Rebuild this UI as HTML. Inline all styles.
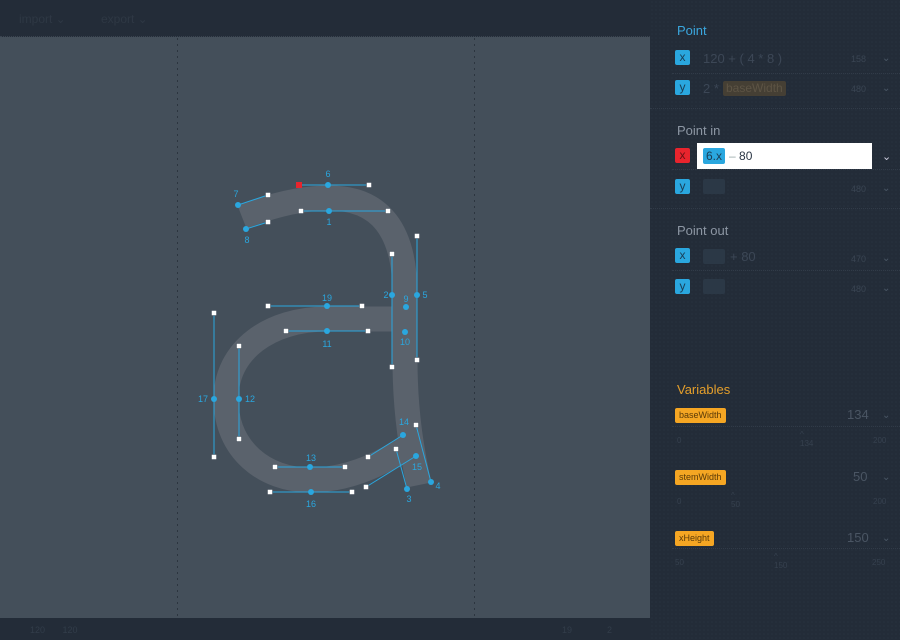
<!DOCTYPE html>
<html><head><meta charset="utf-8"><style>
*{margin:0;padding:0;box-sizing:border-box}
body{width:900px;height:640px;overflow:hidden;background:#232c38;font-family:"Liberation Sans",sans-serif;position:relative}
.a{position:absolute}
.top{left:0;top:0;width:650px;height:37px;background:#232c38;border-bottom:1px dotted #3a4450}
.canvas{left:0;top:37px;width:650px;height:581px;background:#444f5a}
.bot{left:0;top:618px;width:650px;height:22px;background:#232c38}
.side{left:650px;top:0;width:250px;height:640px;background:#232c38;background-image:radial-gradient(#2c3643 0.6px,transparent 0.8px);background-size:4px 4px}
.h{font-size:13px}
.bd{width:15px;height:15px;border-radius:2px;background:#2aa7df;color:#1a3d55;font-size:12px;text-align:center;line-height:14px}
.dim{color:#3c4756;font-size:13px}
.ch{color:#3a4553;font-size:9px}
.cv{color:#4a5665;font-size:10px}
.sep{height:1px;border-top:1px dotted #313b48}
.ob{height:15px;border-radius:2px;background:#f5a623;color:#5a3a08;font-size:9px;line-height:15px;padding:0 4px}
.sm{color:#36414f;font-size:8px}
.vl{top:38px;width:1px;height:580px;background:repeating-linear-gradient(to bottom,#2c353f 0 2px,transparent 2px 6px)}
</style></head><body>
<div class="a top"></div>
<div class="a" style="left:19px;top:12px;color:#2e3844;font-size:12px">import ⌄</div>
<div class="a" style="left:101px;top:12px;color:#2e3844;font-size:12px">export ⌄</div>
<div class="a canvas"></div>
<div class="a vl" style="left:177px"></div>
<div class="a vl" style="left:474px"></div>
<div class="a bot"></div>
<div class="a" style="left:30px;top:625px;color:#323d4a;font-size:9px">120 &nbsp;&nbsp;&nbsp;&nbsp;&nbsp; 120</div>
<div class="a" style="left:562px;top:625px;color:#323d4a;font-size:9px">19 &nbsp;&nbsp;&nbsp;&nbsp;&nbsp;&nbsp;&nbsp;&nbsp;&nbsp;&nbsp;&nbsp;&nbsp; 2</div>

<svg class="a" style="left:0;top:0" width="650" height="640" viewBox="0 0 650 640">
<g fill="none" stroke="#5a626c" stroke-width="25">
<path d="M242,217 C270,206 300,198 329,198 C380,198 405,230 405,295 L405,360 C405,420 414,460 419,485"/>
<path d="M405,319 L327,319 C270,319 226,350 226,399 C226,450 265,480 310,480 C350,480 385,462 410,445"/>
</g>
<g stroke="#2aa7df" stroke-width="1" fill="none">
<line x1="238" y1="205" x2="268" y2="195"/><line x1="246" y1="229" x2="268" y2="222"/>
<line x1="299" y1="185" x2="369" y2="185"/><line x1="301" y1="211" x2="388" y2="211"/>
<line x1="392" y1="254" x2="392" y2="367"/><line x1="417" y1="236" x2="417" y2="360"/>
<line x1="268" y1="306" x2="362" y2="306"/><line x1="286" y1="331" x2="368" y2="331"/>
<line x1="214" y1="313" x2="214" y2="457"/><line x1="239" y1="346" x2="239" y2="439"/>
<line x1="275" y1="467" x2="345" y2="467"/><line x1="270" y1="492" x2="352" y2="492"/>
<line x1="403" y1="435" x2="368" y2="457"/><line x1="416" y1="456" x2="366" y2="487"/>
<line x1="407" y1="489" x2="396" y2="449"/><line x1="431" y1="482" x2="416" y2="425"/>
</g>
<g fill="#2aa7df">
<circle cx="238" cy="205" r="3"/><circle cx="246" cy="229" r="3"/><circle cx="328" cy="185" r="3"/><circle cx="329" cy="211" r="3"/>
<circle cx="392" cy="295" r="3"/><circle cx="417" cy="295" r="3"/><circle cx="406" cy="307" r="3"/><circle cx="405" cy="332" r="3"/>
<circle cx="327" cy="306" r="3"/><circle cx="327" cy="331" r="3"/><circle cx="214" cy="399" r="3"/><circle cx="239" cy="399" r="3"/>
<circle cx="310" cy="467" r="3"/><circle cx="311" cy="492" r="3"/><circle cx="403" cy="435" r="3"/><circle cx="416" cy="456" r="3"/>
<circle cx="407" cy="489" r="3"/><circle cx="431" cy="482" r="3"/>
</g>
<g fill="#fff" stroke="#444f5a" stroke-width="0.5">
<rect x="265.5" y="192.5" width="5" height="5"/><rect x="265.5" y="219.5" width="5" height="5"/>
<rect x="366.5" y="182.5" width="5" height="5"/><rect x="298.5" y="208.5" width="5" height="5"/><rect x="385.5" y="208.5" width="5" height="5"/>
<rect x="389.5" y="251.5" width="5" height="5"/><rect x="389.5" y="364.5" width="5" height="5"/><rect x="414.5" y="233.5" width="5" height="5"/><rect x="414.5" y="357.5" width="5" height="5"/>
<rect x="265.5" y="303.5" width="5" height="5"/><rect x="359.5" y="303.5" width="5" height="5"/><rect x="283.5" y="328.5" width="5" height="5"/><rect x="365.5" y="328.5" width="5" height="5"/>
<rect x="211.5" y="310.5" width="5" height="5"/><rect x="211.5" y="454.5" width="5" height="5"/><rect x="236.5" y="343.5" width="5" height="5"/><rect x="236.5" y="436.5" width="5" height="5"/>
<rect x="272.5" y="464.5" width="5" height="5"/><rect x="342.5" y="464.5" width="5" height="5"/><rect x="267.5" y="489.5" width="5" height="5"/><rect x="349.5" y="489.5" width="5" height="5"/>
<rect x="365.5" y="454.5" width="5" height="5"/><rect x="363.5" y="484.5" width="5" height="5"/><rect x="393.5" y="446.5" width="5" height="5"/><rect x="413.5" y="422.5" width="5" height="5"/>
</g>
<rect x="296" y="182" width="6" height="6" fill="#e8242d"/>
<g fill="#2aa7df" font-family="Liberation Sans" font-size="9" text-anchor="middle">
<text x="236" y="197">7</text><text x="247" y="243">8</text><text x="328" y="177">6</text><text x="329" y="225">1</text>
<text x="386" y="298">2</text><text x="425" y="298">5</text><text x="406" y="302">9</text><text x="405" y="345">10</text>
<text x="327" y="301">19</text><text x="327" y="347">11</text><text x="203" y="402">17</text><text x="250" y="402">12</text>
<text x="311" y="461">13</text><text x="311" y="507">16</text><text x="404" y="425">14</text><text x="417" y="470">15</text>
<text x="409" y="502">3</text><text x="438" y="489">4</text>
</g>
</svg>

<div class="a side"></div>
<div class="a h" style="left:677px;top:23px;color:#3aa6dd">Point</div>
<div class="a bd" style="left:675px;top:50px">x</div><div class="a dim" style="left:703px;top:51px">120 + ( 4 * 8 )</div><div class="a ch" style="left:851px;top:54px">158</div><div class="a cv" style="left:882px;top:53px">⌄</div>
<div class="a sep" style="left:672px;top:73px;width:228px"></div>
<div class="a bd" style="left:675px;top:80px">y</div><div class="a dim" style="left:703px;top:81px">2 *</div><div class="a" style="left:723px;top:81px;height:15px;padding:0 3px;background:#453f34;color:#5d5445;font-size:12px;line-height:15px;border-radius:2px">baseWidth</div><div class="a ch" style="left:851px;top:84px">480</div><div class="a cv" style="left:882px;top:83px">⌄</div>
<div class="a sep" style="left:650px;top:108px;width:250px"></div>
<div class="a h" style="left:677px;top:123px;color:#8c96a3">Point in</div>
<div class="a bd" style="left:675px;top:148px;background:#e8242d;color:#6a1015">x</div>
<div class="a" style="left:697px;top:143px;width:175px;height:26px;background:#fff"></div>
<div class="a" style="left:703px;top:148px;width:22px;height:16px;background:#2aa7df;border-radius:2px;color:#1a3d55;font-size:12px;line-height:16px;text-align:center">6.x</div>
<div class="a" style="left:729px;top:149px;font-size:12px;color:#2a3544"><span style="color:#9aa">–</span> 80</div>
<div class="a" style="left:882px;top:150px;color:#ccd;font-size:11px">⌄</div>
<div class="a sep" style="left:672px;top:169px;width:228px"></div>
<div class="a bd" style="left:675px;top:179px">y</div><div class="a" style="left:703px;top:179px;width:22px;height:15px;background:#2b3846;border-radius:2px"></div><div class="a ch" style="left:851px;top:184px">480</div><div class="a cv" style="left:882px;top:183px">⌄</div>
<div class="a sep" style="left:650px;top:208px;width:250px"></div>
<div class="a h" style="left:677px;top:223px;color:#8c96a3">Point out</div>
<div class="a bd" style="left:675px;top:248px">x</div><div class="a" style="left:703px;top:249px;width:22px;height:15px;background:#2b3846;border-radius:2px"></div><div class="a dim" style="left:730px;top:249px">+ 80</div><div class="a ch" style="left:851px;top:254px">470</div><div class="a cv" style="left:882px;top:253px">⌄</div>
<div class="a sep" style="left:672px;top:270px;width:228px"></div>
<div class="a bd" style="left:675px;top:279px">y</div><div class="a" style="left:703px;top:279px;width:22px;height:15px;background:#2b3846;border-radius:2px"></div><div class="a ch" style="left:851px;top:284px">480</div><div class="a cv" style="left:882px;top:283px">⌄</div>

<div class="a h" style="left:677px;top:382px;color:#e59f2b">Variables</div>
<div class="a ob" style="left:675px;top:408px">baseWidth</div><div class="a" style="left:847px;top:407px;color:#4a5563;font-size:13px">134</div><div class="a cv" style="left:882px;top:410px">⌄</div>
<div class="a sep" style="left:672px;top:426px;width:228px"></div>
<div class="a sm" style="left:677px;top:436px">0</div><div class="a sm" style="left:800px;top:430px">^<br>134</div><div class="a sm" style="left:873px;top:436px">200</div>
<div class="a ob" style="left:675px;top:470px">stemWidth</div><div class="a" style="left:853px;top:469px;color:#4a5563;font-size:13px">50</div><div class="a cv" style="left:882px;top:472px">⌄</div>
<div class="a sm" style="left:677px;top:497px">0</div><div class="a sm" style="left:731px;top:491px">^<br>50</div><div class="a sm" style="left:873px;top:497px">200</div>
<div class="a ob" style="left:675px;top:531px">xHeight</div><div class="a" style="left:847px;top:530px;color:#4a5563;font-size:13px">150</div><div class="a cv" style="left:882px;top:533px">⌄</div>
<div class="a sep" style="left:672px;top:548px;width:228px"></div>
<div class="a sm" style="left:675px;top:558px">50</div><div class="a sm" style="left:774px;top:552px">^<br>150</div><div class="a sm" style="left:872px;top:558px">250</div>
</body></html>
